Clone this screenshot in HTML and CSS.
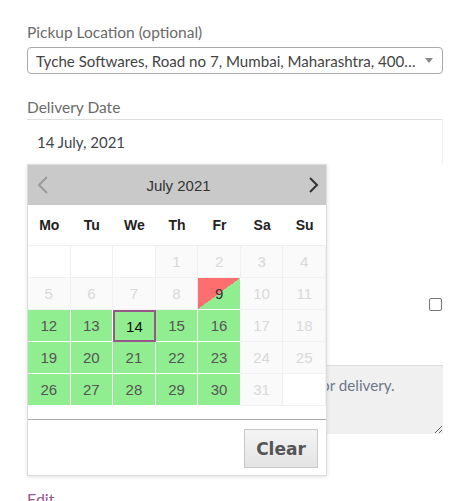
FILE: index.html
```html
<!DOCTYPE html>
<html>
<head>
<meta charset="utf-8">
<link rel="stylesheet" href="styles.css">
</head>
<body>
<div class="page">
  <div class="field">
    <div class="label">Pickup Location (optional)</div>
    <div class="select">
      <span class="select-text">Tyche Softwares, Road no 7, Mumbai, Maharashtra, 400…</span>
      <span class="select-arrow"></span>
    </div>
  </div>
  <div class="field date-field">
    <div class="label">Delivery Date</div>
    <div class="date-wrap">
      <div class="date-input">14 July, 2021</div>
      <div class="picker">
        <div class="picker-head">
          <svg class="nav prev" width="12" height="18" viewBox="0 0 12 18"><polyline points="10,1 2,9 10,17" fill="none" stroke="#9a9a9a" stroke-width="2"/></svg>
          <span class="month">July 2021</span>
          <svg class="nav next" width="12" height="18" viewBox="0 0 12 18"><polyline points="2,2 9,9 2,16" fill="none" stroke="#333" stroke-width="2"/></svg>
        </div>
        <div class="weekdays">
          <span>Mo</span><span>Tu</span><span>We</span><span>Th</span><span>Fr</span><span>Sa</span><span>Su</span>
        </div>
        <div class="days">
          <span class="d empty"></span><span class="d empty"></span><span class="d empty"></span>
          <span class="d off">1</span><span class="d off">2</span><span class="d off">3</span><span class="d off">4</span>
          <span class="d off">5</span><span class="d off">6</span><span class="d off">7</span><span class="d off">8</span>
          <span class="d split">9</span><span class="d off">10</span><span class="d off">11</span>
          <span class="d on">12</span><span class="d on">13</span><span class="d on today">14</span><span class="d on">15</span><span class="d on">16</span><span class="d off">17</span><span class="d off">18</span>
          <span class="d on">19</span><span class="d on">20</span><span class="d on">21</span><span class="d on">22</span><span class="d on">23</span><span class="d off">24</span><span class="d off">25</span>
          <span class="d on">26</span><span class="d on">27</span><span class="d on">28</span><span class="d on">29</span><span class="d on">30</span><span class="d off">31</span><span class="d empty"></span>
        </div>
        <div class="picker-foot">
          <button class="clear">Clear</button>
        </div>
      </div>
    </div>
  </div>
  <div class="check-row"><span class="checkbox"></span></div>
  <textarea class="notes" placeholder="Notes about your order, e.g. special notes for delivery."></textarea>
  <a class="edit">Edit</a>
</div>
</body>
</html>
```

FILE: styles.css
```css
html, body {
  margin: 0;
  padding: 0;
  background: #fff;
}
body {
  font-family: "Lato", "Open Sans", sans-serif;
  overflow: hidden;
}
.page {
  width: 416px;
  margin-left: 27px;
  padding-top: 20px;
}
.label {
  font-size: 15.5px;
  line-height: 24px;
  color: #6a6a6a;
}
.select {
  margin-top: 3px;
  height: 27px;
  box-sizing: border-box;
  border: 1px solid #aaa;
  border-radius: 4px;
  display: flex;
  align-items: center;
  padding: 0 8px 0 8px;
}
.select-text {
  flex: 1;
  font-size: 15.1px;
  color: #444;
  white-space: nowrap;
  overflow: hidden;
}
.select-arrow {
  width: 0;
  height: 0;
  border-left: 4px solid transparent;
  border-right: 4px solid transparent;
  border-top: 5px solid #888;
  margin-left: 8px;
  margin-right: 1px;
}
.date-field {
  margin-top: 21px;
}
.date-wrap {
  position: relative;
}
.date-input {
  height: 45px;
  box-sizing: border-box;
  border-top: 1px solid #dedede;
  border-right: 1px solid #f2f2f2;
  padding: 10px 10px;
  font-size: 15px;
  line-height: 24px;
  color: #43454b;
}
.picker {
  position: absolute;
  left: 0;
  top: 100%;
  width: 300px;
  box-sizing: border-box;
  border: 1px solid #ddd;
  background: #fff;
  box-shadow: 0 1px 4px rgba(0,0,0,0.12);
  font-family: "Liberation Sans", Arial, sans-serif;
  z-index: 5;
}
.picker-head {
  height: 40px;
  background: #c9c9c9;
  display: flex;
  align-items: center;
  justify-content: space-between;
  padding: 0 6px 0 9px;
}
.month {
  font-size: 15px;
  color: #333;
}
.weekdays {
  height: 41px;
  display: grid;
  grid-template-columns: repeat(7, 1fr);
  align-items: center;
  text-align: center;
  font-weight: bold;
  font-size: 14px;
  color: #222;
  border-bottom: 1px solid #f0f0f0;
  box-sizing: border-box;
}
.days {
  display: grid;
  grid-template-columns: repeat(7, 1fr);
  grid-auto-rows: 32px;
}
.d {
  box-sizing: border-box;
  border-right: 1px solid #f0f0f0;
  border-bottom: 1px solid #f0f0f0;
  display: flex;
  align-items: center;
  justify-content: center;
  font-size: 15px;
}
.empty {
  background: #fff;
}
.off {
  background: #fafafa;
  color: #d8d8d8;
}
.on {
  background: #90ee90;
  color: #555;
  border-color: #fff;
}
.split {
  background: linear-gradient(to bottom right, #ff6e6e 50%, #90ee90 50%);
  color: #333;
  border-color: #fff;
}
.today {
  border: 2px solid #96588a;
  color: #111;
}
.picker-foot {
  margin-top: 13px;
  border-top: 1px solid #aaa;
  height: 56px;
  box-sizing: border-box;
  display: flex;
  justify-content: flex-end;
  align-items: flex-start;
  padding: 9px 8px 0 0;
}
.clear {
  width: 74px;
  height: 39px;
  box-sizing: border-box;
  border: 1px solid #c8c8c8;
  background: linear-gradient(#f4f4f4, #e4e4e4);
  font-family: "DejaVu Sans", Verdana, sans-serif;
  font-weight: bold;
  font-size: 17px;
  color: #555;
  padding: 0;
}
.check-row {
  margin-top: 134px;
  height: 13px;
  display: flex;
  justify-content: flex-end;
}
.checkbox {
  width: 13px;
  height: 13px;
  box-sizing: border-box;
  border: 1px solid #777;
  border-radius: 2px;
  margin-right: 1px;
}
.notes {
  display: block;
  margin-top: 54px;
  width: 416px;
  height: 69px;
  box-sizing: border-box;
  border: none;
  border-top: 1px solid #dcdcdc;
  background: #f0f0f0;
  padding: 7px 10px;
  font-family: "Lato", "Open Sans", sans-serif;
  font-size: 15.2px;
  line-height: 24px;
  resize: both;
}
.notes::placeholder {
  color: #6d7888;
}
.edit {
  display: block;
  margin-top: 53px;
  font-size: 16px;
  line-height: 24px;
  color: #96588a;
}
```
